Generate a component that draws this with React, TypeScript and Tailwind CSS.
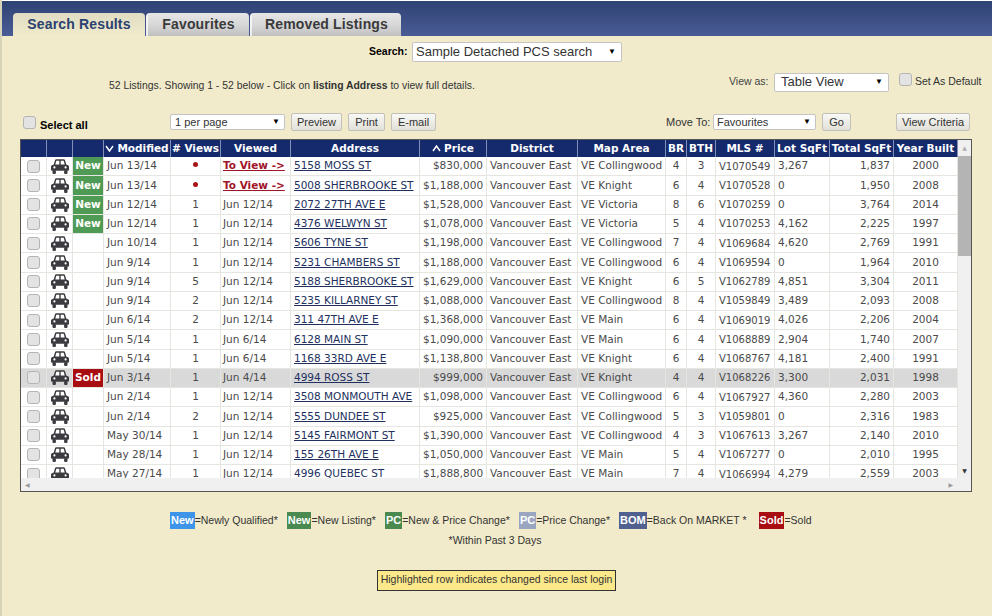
const ROWS = [
  ["new", "Jun 13/14", "*", "To View ->", "5158 MOSS ST", "$830,000", "VE Collingwood", "4", "3", "V1070549", "3,267", "1,837", "2000"],
  ["new", "Jun 13/14", "*", "To View ->", "5008 SHERBROOKE ST", "$1,188,000", "VE Knight", "6", "4", "V1070528", "0", "1,950", "2008"],
  ["new", "Jun 12/14", "1", "Jun 12/14", "2072 27TH AVE E", "$1,528,000", "VE Victoria", "8", "6", "V1070259", "0", "3,764", "2014"],
  ["new", "Jun 12/14", "1", "Jun 12/14", "4376 WELWYN ST", "$1,078,000", "VE Victoria", "5", "4", "V1070253", "4,162", "2,225", "1997"],
  ["", "Jun 10/14", "1", "Jun 12/14", "5606 TYNE ST", "$1,198,000", "VE Collingwood", "7", "4", "V1069684", "4,620", "2,769", "1991"],
  ["", "Jun 9/14", "1", "Jun 12/14", "5231 CHAMBERS ST", "$1,188,000", "VE Collingwood", "6", "4", "V1069594", "0", "1,964", "2010"],
  ["", "Jun 9/14", "5", "Jun 12/14", "5188 SHERBROOKE ST", "$1,629,000", "VE Knight", "6", "5", "V1062789", "4,851", "3,304", "2011"],
  ["", "Jun 9/14", "2", "Jun 12/14", "5235 KILLARNEY ST", "$1,088,000", "VE Collingwood", "8", "4", "V1059849", "3,489", "2,093", "2008"],
  ["", "Jun 6/14", "2", "Jun 12/14", "311 47TH AVE E", "$1,368,000", "VE Main", "6", "4", "V1069019", "4,026", "2,206", "2004"],
  ["", "Jun 5/14", "1", "Jun 6/14", "6128 MAIN ST", "$1,090,000", "VE Main", "6", "4", "V1068889", "2,904", "1,740", "2007"],
  ["", "Jun 5/14", "1", "Jun 6/14", "1168 33RD AVE E", "$1,138,800", "VE Knight", "6", "4", "V1068767", "4,181", "2,400", "1991"],
  ["sold", "Jun 3/14", "1", "Jun 4/14", "4994 ROSS ST", "$999,000", "VE Knight", "4", "4", "V1068226", "3,300", "2,031", "1998"],
  ["", "Jun 2/14", "1", "Jun 12/14", "3508 MONMOUTH AVE", "$1,098,000", "VE Collingwood", "6", "4", "V1067927", "4,360", "2,280", "2003"],
  ["", "Jun 2/14", "2", "Jun 12/14", "5555 DUNDEE ST", "$925,000", "VE Collingwood", "5", "3", "V1059801", "0", "2,316", "1983"],
  ["", "May 30/14", "1", "Jun 12/14", "5145 FAIRMONT ST", "$1,390,000", "VE Collingwood", "4", "3", "V1067613", "3,267", "2,140", "2010"],
  ["", "May 28/14", "1", "Jun 12/14", "155 26TH AVE E", "$1,050,000", "VE Main", "5", "4", "V1067277", "0", "2,010", "1995"],
  ["", "May 27/14", "1", "Jun 12/14", "4996 QUEBEC ST", "$1,888,800", "VE Main", "7", "4", "V1066994", "4,279", "2,559", "2003"],
];

const COLS = [26, 26, 31, 67, 50, 70, 129, 67, 91, 88, 21, 29, 59, 55, 64, 64];

const HEADERS = ["", "", "", "Modified", "# Views", "Viewed", "Address", "Price", "District", "Map Area", "BR", "BTH", "MLS #", "Lot SqFt", "Total SqFt", "Year Built"];

function Box() {
  return <div className="w-[13px] h-[13px] rounded-[3px] border border-[#b4b4b4] bg-[#e3e3e3] shrink-0" />;
}

function Car() {
  return (
    <svg viewBox="0 0 18 15" className="w-[18px] h-[15px] mx-auto block" fill="#3c3c40">
      <path d="M4 1.2 C4.2.5 4.8.2 5.5.2h7c.7 0 1.3.3 1.5 1L15.3 5.6 17 6.2c.6.2 1 .7 1 1.3v3.3c0 .5-.4.9-.9.9H.9c-.5 0-.9-.4-.9-.9V7.5c0-.6.4-1.1 1-1.3l1.7-.6Z" />
      <rect x="1.5" y="11" width="3.4" height="4" rx="1" />
      <rect x="13.1" y="11" width="3.4" height="4" rx="1" />
      <path d="M5.3 1.7h3v3.7H4.3ZM9.7 1.7h3l1 3.7h-4Z" fill="#ffffff" />
      <circle cx="3.4" cy="8.4" r="1.1" fill="#ffffff" />
      <circle cx="14.6" cy="8.4" r="1.1" fill="#ffffff" />
    </svg>
  );
}

function Sort({ down }: { down: boolean }) {
  return (
    <svg viewBox="0 0 9 7" className="inline-block w-[9px] h-[7px] mr-[3px]" fill="none" stroke="#ffffff" strokeWidth="1.5">
      <path d={down ? "M1 1 4.5 6 8 1" : "M1 6 4.5 1 8 6"} />
    </svg>
  );
}

function Select({ label, className }: { label: string; className: string }) {
  return (
    <div className={`flex items-center justify-between bg-white border border-[#c4c4c4] rounded-[2px] whitespace-nowrap ${className}`}>
      <span>{label}</span>
      <span className="text-[8px] text-black">▼</span>
    </div>
  );
}

function Btn({ label, className = "" }: { label: string; className?: string }) {
  return (
    <div className={`h-[18px] flex items-center justify-center bg-gradient-to-b from-[#f8f8f6] to-[#e2e0d8] border border-[#c2c0b8] rounded-[2px] text-[11px] text-[#333] ${className}`}>
      {label}
    </div>
  );
}

function Tab({ label, active, className }: { label: string; active?: boolean; className: string }) {
  return (
    <div
      className={`h-[23px] flex items-center justify-center rounded-t-[4px] font-bold text-[14px] tracking-[0.15px] ${
        active
          ? "bg-gradient-to-b from-[#dfdcc4] to-[#f1ebcb] text-[#2b4170]"
          : "bg-gradient-to-b from-[#e6e6e6] via-[#d8d8d8] to-[#c0c0c0] text-[#3a3a3a] border-l-2 border-white/70"
      } ${className}`}
    >
      {label}
    </div>
  );
}

function Legend({ tag, bg, text, className = "" }: { tag: string; bg: string; text: string; className?: string }) {
  return (
    <div className={`flex items-center ${className}`}>
      <span className={`h-[17px] px-[1px] flex items-center font-bold text-[11px] text-white ${bg}`}>{tag}</span>
      <span>{text}</span>
    </div>
  );
}

function Row({ row }: { row: string[] }) {
  const [flag, modified, views, viewed, address, price, area, br, bth, mls, lot, total, year] = row;
  const sold = flag === "sold";
  const cell = "border-r border-b border-[#e6e6e0] px-[3px] whitespace-nowrap overflow-hidden";
  return (
    <tr className={`h-[19.25px] ${sold ? "bg-[#d9d9d9]" : "bg-white"}`}>
      <td className={`${cell} !px-[6px]`}><Box /></td>
      <td className={`${cell} !px-0`}><Car /></td>
      <td className={`${cell} !p-0 text-center font-bold text-white ${flag === "new" ? "bg-[#4f9a55]" : sold ? "bg-[#a80d12]" : ""}`}>
        {flag === "new" ? "New" : sold ? "Sold" : ""}
      </td>
      <td className={cell}>{modified}</td>
      <td className={`${cell} text-center`}>
        {views === "*" ? <span className="inline-block w-[5px] h-[5px] rounded-full bg-[#a81418] align-[2px]" /> : views}
      </td>
      <td className={`${cell} !pl-[2px]`}>
        {viewed === "To View ->" ? <span className="font-bold text-[#a01428] underline">{viewed}</span> : viewed}
      </td>
      <td className={cell}><span className="text-[#22305e] underline">{address}</span></td>
      <td className={`${cell} text-right`}>{price}</td>
      <td className={cell}>Vancouver East</td>
      <td className={cell}>{area}</td>
      <td className={`${cell} text-center !px-0`}>{br}</td>
      <td className={`${cell} text-center !px-0`}>{bth}</td>
      <td className={`${cell} !text-[10px]`}>{mls}</td>
      <td className={cell}>{lot}</td>
      <td className={`${cell} text-right`}>{total}</td>
      <td className={`${cell} text-center`}>{year}</td>
    </tr>
  );
}

export default function App() {
  return (
    <div className="w-[992px] h-[616px] overflow-hidden bg-[#f1ebcb] border-l-2 border-[#d8d4b8] font-['Liberation_Sans',Arial,sans-serif] text-[#333]">
      {/* tab bar */}
      <div className="h-[36px] -ml-[2px] pl-[13px] pt-[12px] flex items-start gap-[1px] bg-gradient-to-b from-[#2f4274] to-[#4a5c95] border-t border-white">
        <Tab label="Search Results" active className="w-[132px]" />
        <Tab label="Favourites" className="w-[103px]" />
        <Tab label="Removed Listings" className="w-[151px]" />
      </div>

      {/* search picker */}
      <div className="h-[20px] mt-[6px] flex items-center pl-[367px] gap-[5px] text-[10.5px]">
        <span className="font-bold text-black w-[38px] whitespace-nowrap">Search:</span>
        <Select label="Sample Detached PCS search" className="w-[210px] h-[20px] pl-[3px] pr-[5px] text-[13px]" />
      </div>

      {/* listing count + view as */}
      <div className="h-[20px] mt-[10px] flex items-center pl-[107px] text-[10.4px]">
        <span className="w-[620px] mt-[8px]">
          52 Listings. Showing 1 - 52 below - Click on <b>listing Address</b> to view full details.
        </span>
        <span className="text-[10.5px] w-[45px] text-[#444]">View as:</span>
        <Select label="Table View" className="w-[115px] h-[19px] pl-[6px] pr-[5px] text-[13px]" />
        <div className="ml-[10px] mb-[5px]"><Box /></div>
        <span className="ml-[3px] text-[10.5px] whitespace-nowrap">Set As Default</span>
      </div>

      {/* toolbar */}
      <div className="h-[18px] mt-[21px] flex items-center text-[11px]">
        <div className="ml-[21px]"><Box /></div>
        <span className="ml-[4px] mt-[7px] w-[130px] font-bold text-black">Select all</span>
        <Select label="1 per page" className="w-[115px] h-[16px] pl-[4px] pr-[4px]" />
        <Btn label="Preview" className="ml-[6px] w-[51px]" />
        <Btn label="Print" className="ml-[6px] w-[37px]" />
        <Btn label="E-mail" className="ml-[6px] w-[45px]" />
        <span className="ml-[230px] w-[47px] whitespace-nowrap">Move To:</span>
        <Select label="Favourites" className="w-[103px] h-[16px] pl-[3px] pr-[4px]" />
        <Btn label="Go" className="ml-[6px] w-[29px]" />
        <Btn label="View Criteria" className="ml-[45px] w-[74px]" />
      </div>

      {/* results grid */}
      <div className="mt-[8px] ml-[18px] w-[952px] h-[353px] border border-[#555] flex flex-col bg-white font-['DejaVu_Sans',Verdana,sans-serif] text-[10.5px] text-[#4a4a4a]">
        <div className="flex-1 min-h-0 flex overflow-hidden">
          <div className="flex-1 overflow-hidden">
            <table className="table-fixed border-separate border-spacing-0 w-[937px]">
              <colgroup>
                {COLS.map((w, i) => <col key={i} style={{ width: w }} />)}
              </colgroup>
              <thead>
                <tr className="h-[17px] bg-[#142a6c] text-white font-bold">
                  {HEADERS.map((h, i) => (
                    <th key={i} className="border-r border-[#8090b8] p-0 text-center whitespace-nowrap overflow-hidden font-bold">
                      {(h === "Modified" || h === "Price") && <Sort down={h === "Modified"} />}
                      {h}
                    </th>
                  ))}
                </tr>
              </thead>
              <tbody>
                {ROWS.map((r) => <Row key={r[9]} row={r} />)}
              </tbody>
            </table>
          </div>
          {/* vertical scrollbar */}
          <div className="w-[13px] flex flex-col items-center bg-[#f0f0f0]">
            <span className="h-[16px] text-[6px] leading-[16px] text-[#b0b0b0]">▲</span>
            <div className="w-full h-[100px] bg-[#b4b4b4]" />
            <div className="flex-1" />
            <span className="h-[14px] text-[6px] leading-[14px] text-[#333]">▼</span>
          </div>
        </div>
        {/* horizontal scrollbar */}
        <div className="h-[13px] flex items-center justify-between px-[4px] bg-[#f0f0f0] text-[6px] text-[#999]">
          <span>◀</span>
          <span className="mr-[14px]">▶</span>
        </div>
      </div>

      {/* legend */}
      <div className="mt-[20px] ml-[168px] flex items-center text-[10.5px] text-[#333] whitespace-nowrap">
        <Legend tag="New" bg="bg-[#3d94e8]" text="=Newly Qualified*" className="mr-[9px]" />
        <Legend tag="New" bg="bg-[#4a8a50]" text="=New Listing*" className="mr-[9px]" />
        <Legend tag="PC" bg="bg-[#4a8a50]" text="=New & Price Change*" className="mr-[9px]" />
        <Legend tag="PC" bg="bg-[#9aa6c0]" text="=Price Change*" className="mr-[9px]" />
        <Legend tag="BOM" bg="bg-[#50608f]" text="=Back On MARKET *" className="mr-[12px]" />
        <Legend tag="Sold" bg="bg-[#a80d12]" text="=Sold" />
      </div>
      <div className="mt-[4px] text-center text-[10.5px] pr-[4px]">*Within Past 3 Days</div>

      <div className="mt-[21px] ml-[375px] w-[239px] h-[21px] flex items-center justify-center bg-[#fbe88a] border border-[#333] text-[10.5px] text-[#333] whitespace-nowrap">
        Highlighted row indicates changed since last login
      </div>
    </div>
  );
}
